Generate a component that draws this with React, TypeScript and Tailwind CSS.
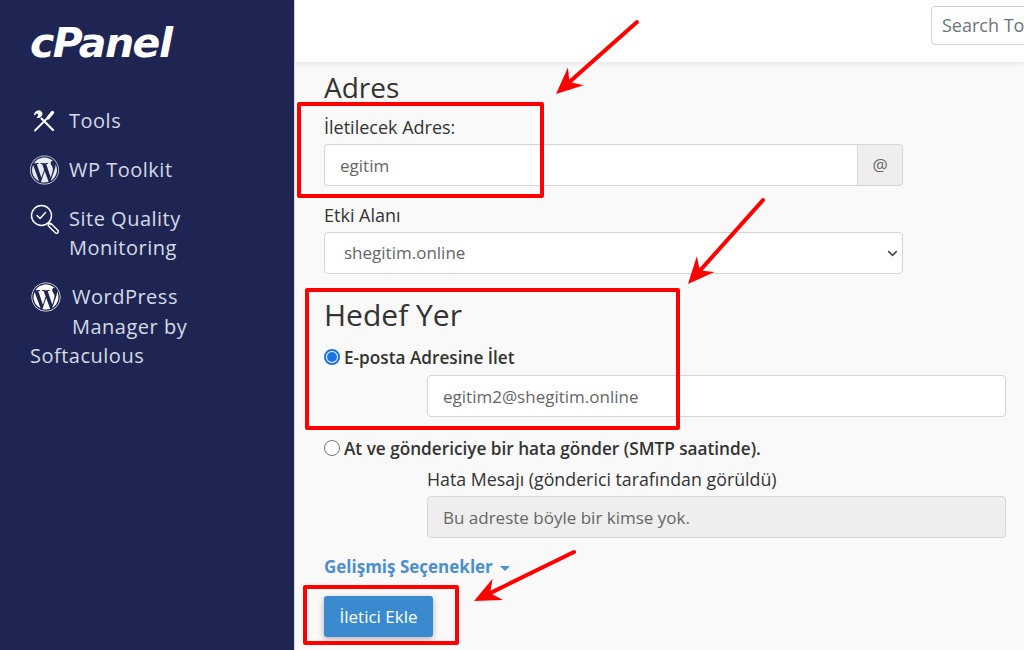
import { ChevronDown } from "lucide-react"
import { FaWordpress } from "react-icons/fa"

function ToolsIcon() {
  return (
    <svg viewBox="0 0 22 22" className="h-[22px] w-[22px]" fill="none" stroke="currentColor" strokeLinecap="round" strokeLinejoin="round">
      <path d="M2 20.500 13.500 9" strokeWidth="1.800" />
      <path d="M15 8 19.500 2.500" strokeWidth="3.400" />
      <path d="M8.500 8.500 20 20" strokeWidth="2.200" />
      <path d="M7 1C4.500.2 1.400 2 1.500 4.800l2.300-1.900 2.400 2.100-2 2.400c2.800.6 5.400-1.800 4.800-4.500z" fill="currentColor" strokeWidth="1" />
    </svg>
  )
}

function QualityIcon() {
  return (
    <svg viewBox="0 0 30 30" className="h-[30px] w-[30px]" fill="none" stroke="currentColor" strokeLinecap="round" strokeLinejoin="round">
      <circle cx="11.500" cy="11.500" r="10" strokeWidth="1.400" />
      <path d="m7 11.500 3 3 5.500-6" strokeWidth="1.400" />
      <path d="m18.500 18.500 2 2" strokeWidth="1.400" />
      <path d="m21 19.500 7 7a1.800 1.800 0 0 1-2.500 2.500l-7-7a1.800 1.800 0 0 1 2.500-2.500z" strokeWidth="1.400" />
    </svg>
  )
}

function Sidebar() {
  return (
    <aside className="w-[294px] shrink-0 bg-[#1f2552] pl-[30px] pr-[100px] text-[20px] leading-[29px] tracking-[0.5px] text-[#d3dae8]">
      <div className="h-[106px] pt-[21px] text-[41px] leading-[44px] font-bold tracking-[-1.500px] text-white italic [font-family:'DejaVu_Sans',sans-serif]">
        cPanel
      </div>
      <div className="flow-root">
        <div className="mb-[20px] flex items-center">
          <span className="mr-[14px] ml-[3px] text-white">
            <ToolsIcon />
          </span>
          Tools
        </div>
        <div className="mb-[20px] flex items-center">
          <FaWordpress className="-my-px mr-[9px] -ml-px h-[30px] w-[31px] text-[#e8ebf2]" />
          WP Toolkit
        </div>
        <div className="mb-[20px] flow-root">
          <span className="float-left h-[35px] text-white">
            <QualityIcon />
          </span>
          <div className="pl-[39px]">
            Site Quality
            <br />
            Monitoring
          </div>
        </div>
        <div className="leading-[29.500px]">
          <FaWordpress className="float-left mr-[11px] ml-[1px] h-[30px] w-[30px] text-white" />
          WordPress Manager by Softaculous
        </div>
      </div>
    </aside>
  )
}

const fieldClass = "h-[42px] rounded-[4px] border border-[#d5d5d5] px-[15px] text-[17px] leading-[42px] text-[#666]"

function Form() {
  return (
    <div className="relative flex-1 bg-[#f9f9f9] pl-[29px] text-[17px] text-[#333]">
      <h2 className="pt-[8px] text-[28px] leading-[34px] text-[#333]">Adres</h2>
      <label className="mt-[11px] block h-[24px] text-[18px] leading-[24px] font-medium">İletilecek Adres:</label>
      <div className="mt-[5px] flex w-[579px]">
        <div className={`${fieldClass} flex-1 rounded-r-none border-r-0 bg-white`}>egitim</div>
        <div className="flex h-[42px] w-[46px] items-center justify-center rounded-r-[4px] border border-[#d5d5d5] bg-[#eee] text-[#666]">
          @
        </div>
      </div>
      <label className="mt-[17px] block h-[24px] text-[18px] leading-[24px] font-medium">Etki Alanı</label>
      <div className={`${fieldClass} mt-[5px] flex w-[579px] items-center justify-between bg-white pr-[2px] pl-[19px]`}>
        shegitim.online
        <ChevronDown className="h-[15px] w-[15px] text-[#444]" strokeWidth={2.500} />
      </div>
      <h2 className="mt-[23px] h-[36px] text-[30px] leading-[36px]">Hedef Yer</h2>
      <label className="mt-[14px] flex h-[22px] items-center text-[17.200px] font-semibold">
        <span className="mt-[-2px] mr-[4px] flex h-[16px] w-[16px] items-center justify-center rounded-full border-2 border-[#1a73e8] bg-white">
          <span className="h-[10px] w-[10px] rounded-full bg-[#1a73e8]" />
        </span>
        E-posta Adresine İlet
      </label>
      <div className={`${fieldClass} mt-[6px] ml-[103px] w-[579px] bg-white`}>egitim2@shegitim.online</div>
      <label className="mt-[21px] flex h-[22px] items-center text-[17.200px] font-semibold">
        <span className="mt-[-2px] mr-[4px] h-[16px] w-[16px] rounded-full border border-[#767676] bg-white" />
        At ve göndericiye bir hata gönder (SMTP saatinde).
      </label>
      <label className="mt-[7px] ml-[103px] block h-[24px] text-[17.800px] leading-[24px] font-medium">
        Hata Mesajı (gönderici tarafından görüldü)
      </label>
      <div className={`${fieldClass} mt-[5px] ml-[103px] w-[579px] bg-[#eee] leading-[40px]`}>Bu adreste böyle bir kimse yok.</div>
      <div className="mt-[17px] flex h-[24px] items-center font-bold text-[#4a8fcf]">
        Gelişmiş Seçenekler
        <span className="mt-[2px] ml-[7px] h-0 w-0 border-x-[5px] border-t-[5px] border-x-transparent border-t-[#4a8fcf]" />
      </div>
      <button className="mt-[17px] h-[41px] w-[109px] rounded-[3px] bg-[#3b8ad0] text-[17px] text-white shadow-[0_2px_6px_rgba(0,0,0,0.3)]">
        İletici Ekle
      </button>
    </div>
  )
}

function Arrow({ x1, y1, x2, y2 }: { x1: number; y1: number; x2: number; y2: number }) {
  const angle = Math.atan2(y2 - y1, x2 - x1)
  const len = 29
  const spread = 0.42
  const p = (a: number) => `${x2 - len * Math.cos(angle + a)},${y2 - len * Math.sin(angle + a)}`
  const nx = x2 - 18 * Math.cos(angle)
  const ny = y2 - 18 * Math.sin(angle)
  return (
    <g>
      <line x1={x1} y1={y1} x2={nx} y2={ny} stroke="#ff0000" strokeWidth="4" strokeLinecap="round" />
      <polygon points={`${x2},${y2} ${p(spread)} ${nx},${ny} ${p(-spread)}`} fill="#ff0000" />
    </g>
  )
}

export default function App() {
  return (
    <div className="relative flex h-[650px] w-[1024px] overflow-hidden bg-white [font-family:'Open_Sans',sans-serif]">
      <Sidebar />
      <main className="flex min-w-0 flex-1 flex-col border-l border-[#dcdce6]">
        <header className="relative z-10 flex h-[62px] shrink-0 justify-end overflow-hidden bg-white pt-[6px] shadow-[0_1px_6px_rgba(0,0,0,0.1)]">
          <div className="h-[39px] w-[160px] shrink-0 translate-x-[67px] rounded-[4px] border border-[#ced4da] px-[10px] text-[18px] leading-[37px] whitespace-nowrap text-[#6c757d]">
            Search Tools
          </div>
        </header>
        <Form />
      </main>

      {/* annotations drawn on top of the screenshot */}
      <div className="absolute top-[102px] left-[297px] z-20 h-[96px] w-[247px] rounded-[2px] border-4 border-[#ff0000]" />
      <div className="absolute top-[288px] left-[305px] z-20 h-[142px] w-[375px] rounded-[2px] border-4 border-[#ff0000]" />
      <div className="absolute top-[585px] left-[303px] z-20 h-[60px] w-[156px] rounded-[2px] border-4 border-[#ff0000]" />
      <svg className="absolute inset-0 z-20 h-[650px] w-[1024px]" viewBox="0 0 1024 650">
        <Arrow x1={637} y1={22} x2={556} y2={94} />
        <Arrow x1={763} y1={200} x2={688} y2={284} />
        <Arrow x1={574} y1={552} x2={474} y2={601} />
      </svg>
    </div>
  )
}
